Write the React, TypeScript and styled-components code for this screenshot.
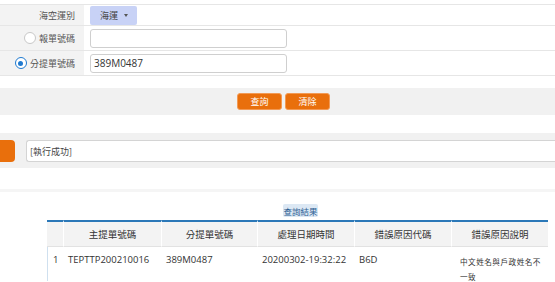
import React from "react";
import styled, { createGlobalStyle } from "styled-components";

const Global = createGlobalStyle`
  html, body { margin: 0; padding: 0; background: #fff; }
  body { font-family: "Open Sans", "Noto Sans CJK TC", sans-serif; color: #333; overflow: hidden; }
  * { box-sizing: border-box; }
`;

const Page = styled.div`
  width: 555px;
  height: 282px;
  overflow: hidden;
  display: flex;
  flex-direction: column;
`;

const Form = styled.div`
  margin-top: 4px;
  display: flex;
  flex-direction: column;
  border-bottom: 1px solid #e6e6e6;
`;

const Row = styled.div<{ $h: number }>`
  display: grid;
  grid-template-columns: 84px 1fr;
  height: ${(p) => p.$h}px;
  border-top: 1px solid #e6e6e6;
`;

const Label = styled.div`
  background: #f3f3f3;
  display: flex;
  align-items: center;
  justify-content: flex-end;
  gap: 3px;
  padding-right: 9px;
  font-family: "Noto Sans CJK TC", sans-serif;
  font-size: 9px;
  color: #555;
`;

const Value = styled.div`
  display: flex;
  align-items: center;
  padding-left: 6px;
`;

const Select = styled.div`
  height: 19px;
  width: 47px;
  margin-top: 1px;
  background: #c8d2f6;
  border-radius: 2px;
  display: flex;
  align-items: center;
  padding-left: 10px;
  gap: 6px;
  font-family: "Noto Sans CJK TC", sans-serif;
  font-size: 9px;
  color: #444;
`;

const Caret = styled.span`
  width: 0;
  height: 0;
  border-left: 2.5px solid transparent;
  border-right: 2.5px solid transparent;
  border-top: 3px solid #555;
`;

const Radio = styled.span<{ $on?: boolean }>`
  width: 12px;
  height: 12px;
  border-radius: 50%;
  border: 1px solid ${(p) => (p.$on ? "#1f7ad0" : "#c8c8c8")};
  background: #fff;
  display: flex;
  align-items: center;
  justify-content: center;
  &::after {
    content: "";
    width: 5px;
    height: 5px;
    border-radius: 50%;
    background: ${(p) => (p.$on ? "#1f7ad0" : "transparent")};
  }
`;

const Input = styled.div`
  width: 197px;
  height: 19px;
  border: 1px solid #cfcfcf;
  border-radius: 3px;
  background: #fff;
  display: flex;
  align-items: center;
  padding-left: 3px;
  font-size: 10px;
  color: #333;
`;

const ButtonBar = styled.div`
  margin-top: 12px;
  height: 27px;
  background: #f1f1f1;
  display: flex;
  align-items: center;
  justify-content: center;
  gap: 3px;
  padding-left: 12px;
`;

const OrangeButton = styled.div`
  width: 45px;
  height: 17px;
  background: #e96f0c;
  border-radius: 3px;
  border: 1px solid #f29a55;
  color: #fff;
  font-family: "Noto Sans CJK TC", sans-serif;
  font-size: 9px;
  display: flex;
  align-items: center;
  justify-content: center;
`;

const MessageBar = styled.div`
  margin-top: 18px;
  height: 35px;
  background: #f1f1f1;
  display: flex;
  align-items: center;
  gap: 11px;
  padding-top: 1px;
`;

const Tab = styled.div`
  width: 15px;
  height: 22px;
  background: #e96f0c;
  border-radius: 0 4px 4px 0;
`;

const MessageInput = styled.div`
  flex: 1;
  height: 22px;
  background: #fff;
  border: 1px solid #d4d4d4;
  border-right: none;
  border-radius: 3px 0 0 3px;
  display: flex;
  align-items: center;
  padding-left: 3px;
  font-family: "Noto Sans CJK TC", sans-serif;
  font-size: 9px;
  color: #444;
`;

const Divider = styled.div`
  margin-top: 21px;
  height: 3px;
  background: #f5f5f5;
`;

const ResultTitle = styled.div`
  margin-top: 12px;
  margin-left: 283px;
  width: 35px;
  height: 13px;
  background: #dce8f4;
  border-radius: 2px;
  color: #2d5f93;
  font-family: "Noto Sans CJK TC", sans-serif;
  font-size: 8.5px;
  display: flex;
  align-items: center;
  justify-content: center;
`;

const Grid = styled.div`
  margin-left: 47px;
  margin-top: 3px;
  width: 501px;
  display: grid;
  grid-template-columns: 16px 98px 96px 97px 97px 97px;
`;

const Head = styled.div`
  height: 27px;
  background: #f3f3f3;
  border-top: 2px solid #2b78b8;
  border-left: 1px solid #fff;
  border-bottom: 1px solid #e2e2e2;
  display: flex;
  align-items: center;
  justify-content: center;
  font-family: "Noto Sans CJK TC", sans-serif;
  font-size: 9.5px;
  color: #333;
  &:first-child { border-left: none; }
`;

const Cell = styled.div<{ $first?: boolean }>`
  height: 34px;
  padding: 5px 0 0 5px;
  font-size: 9.5px;
  line-height: 15px;
  color: #333;
  font-family: "Open Sans", "Noto Sans CJK TC", sans-serif;
  border-left: ${(p) => (p.$first ? "1px solid #cfe0ef" : "none")};
`;

const WrapCell = styled(Cell)`
  font-family: "Noto Sans CJK TC", sans-serif;
  font-size: 7.6px;
  letter-spacing: 0.5px;
  padding: 7px 1px 0 9px;
  line-height: 15px;
`;

export default function App() {
  const headers = ["", "主提單號碼", "分提單號碼", "處理日期時間", "錯誤原因代碼", "錯誤原因說明"];
  return (
    <>
      <Global />
      <Page>
        <Form>
          <Row $h={21}>
            <Label>海空運別</Label>
            <Value>
              <Select>
                海運 <Caret />
              </Select>
            </Value>
          </Row>
          <Row $h={25}>
            <Label>
              <Radio />
              報單號碼
            </Label>
            <Value>
              <Input />
            </Value>
          </Row>
          <Row $h={25}>
            <Label>
              <Radio $on />
              分提單號碼
            </Label>
            <Value>
              <Input>389M0487</Input>
            </Value>
          </Row>
        </Form>
        <ButtonBar>
          <OrangeButton>查詢</OrangeButton>
          <OrangeButton>清除</OrangeButton>
        </ButtonBar>
        <MessageBar>
          <Tab />
          <MessageInput>[執行成功]</MessageInput>
        </MessageBar>
        <Divider />
        <ResultTitle>查詢結果</ResultTitle>
        <Grid>
          {headers.map((h, i) => (
            <Head key={i}>{h}</Head>
          ))}
          <Cell $first>1</Cell>
          <Cell>TEPTTP200210016</Cell>
          <Cell>389M0487</Cell>
          <Cell>20200302-19:32:22</Cell>
          <Cell>B6D</Cell>
          <WrapCell>中文姓名與戶政姓名不一致</WrapCell>
        </Grid>
      </Page>
    </>
  );
}
